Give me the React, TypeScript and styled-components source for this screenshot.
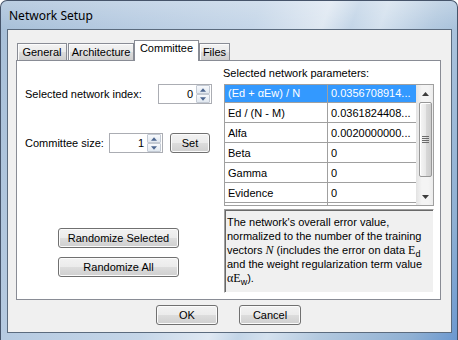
import React from "react"
import styled, { createGlobalStyle, css } from "styled-components"

const GlobalStyle = createGlobalStyle`
    html, body {
        margin: 0;
        padding: 0;
        overflow: hidden;
    }
    body {
        font-family: "Liberation Sans", Arial, sans-serif;
        font-size: 11px;
        color: #000;
    }
    * {
        box-sizing: border-box;
    }
`

const Window = styled.div`
    width: 458px;
    height: 340px;
    display: flex;
    flex-direction: column;
    padding: 0 5px 7px 6px;
    border: 1px solid #46546a;
    border-bottom: none;
    border-radius: 7px 7px 0 0;
    background:
        linear-gradient(180deg, rgba(255,255,255,0.22) 0, rgba(255,255,255,0) 28px),
        linear-gradient(110deg, #a7bfd8 0%, #b8cce2 25%, #c5d6e8 45%, #dfe8f2 57%, #c3d5e7 62%, #d4e1ee 67%, #b3c9df 76%, #8fb0d3 92%, #6b98d0 100%);
`

const TitleBar = styled.div`
    height: 28px;
    display: flex;
    align-items: center;
    padding-left: 2px;
    font-family: "Noto Sans", "Open Sans", sans-serif;
    font-size: 12px;
    color: #000;
`

const Client = styled.div`
    flex: 1;
    display: flex;
    flex-direction: column;
    padding: 10px 10px 0 8px;
    border: 1px solid #5b6b7e;
    background: #f0f0f0;
`

const TabStrip = styled.div`
    height: 20px;
    display: flex;
    align-items: flex-end;
    padding-left: 1px;
    position: relative;
    z-index: 1;
`

const Tab = styled.div<{ $w: number; $active?: boolean; $gap?: number }>`
    width: ${p => p.$w}px;
    height: 17px;
    margin-right: ${p => p.$gap ?? 0}px;
    border: 1px solid #898c95;
    border-bottom: none;
    text-align: center;
    line-height: 16px;
    background: linear-gradient(#f3f3f3 0%, #ebebeb 50%, #dddddd 50%, #cfcfcf 100%);
    box-shadow: inset 1px 1px 0 #fcfcfc;
    ${p => p.$active && css`
        height: 21px;
        margin-bottom: -1px;
        line-height: 15px;
        background: #fff;
        box-shadow: none;
    `}
`

const TabPanel = styled.div`
    height: 240px;
    display: grid;
    grid-template-columns: 207px 210px;
    padding-right: 5px;
    border: 1px solid #898c95;
    background: #fff;
`

const LeftColumn = styled.div`
    display: flex;
    flex-direction: column;
    padding: 23px 12px 0 8px;
`

const FieldRow = styled.div<{ $top?: number }>`
    display: flex;
    align-items: center;
    height: 20px;
    margin-top: ${p => p.$top ?? 0}px;
`

const Label = styled.span<{ $w?: number }>`
    ${p => p.$w ? `width: ${p.$w}px;` : "flex: 1;"}
    white-space: nowrap;
`

const SpinBox = styled.div`
    width: 54px;
    height: 20px;
    display: flex;
    align-items: center;
    border: 1px solid #abadb3;
    background: #fff;
`

const SpinValue = styled.span`
    flex: 1;
    text-align: right;
    padding-right: 3px;
`

const SpinButtons = styled.div`
    width: 14px;
    height: 18px;
    margin-right: 1px;
    display: flex;
    flex-direction: column;
`

const SpinArrow = styled.div`
    flex: 1;
    display: flex;
    align-items: center;
    justify-content: center;
    border: 1px solid #c3cad4;
    border-radius: 1px;
    background: linear-gradient(#f7f9fc, #e1e8f0);
`

const Button = styled.div<{ $w: number; $top?: number }>`
    width: ${p => p.$w}px;
    height: 20px;
    margin-top: ${p => p.$top ?? 0}px;
    display: flex;
    align-items: center;
    justify-content: center;
    border: 1px solid #707070;
    border-radius: 3px;
    background: linear-gradient(#f2f2f2 0%, #ebebeb 50%, #dddddd 50%, #cfcfcf 100%);
    box-shadow: inset 0 0 0 1px #fbfbfb;
    white-space: nowrap;
`

const RandomizeGroup = styled.div`
    display: flex;
    flex-direction: column;
    align-items: center;
    margin-top: 75px;
    gap: 9px;
`

const RightColumn = styled.div`
    display: flex;
    flex-direction: column;
    padding-top: 6px;
`

const Caption = styled.div`
    line-height: 13px;
    margin: 0 0 4px -1px;
    white-space: nowrap;
`

const Grid = styled.div`
    height: 122px;
    display: flex;
    border: 1px solid #a0a0a0;
    background: #fff;
`

const TableArea = styled.div`
    flex: 1;
    overflow: hidden;
`

const Rows = styled.div`
    margin-top: -2px;
`

const Row = styled.div<{ $selected?: boolean }>`
    display: flex;
    height: 20px;
    border-bottom: 1px solid #a0a0a0;
    ${p => p.$selected && css`
        background: #3399ff;
        color: #fff;
    `}
`

const Cell = styled.div<{ $w: number; $divider?: boolean }>`
    width: ${p => p.$w}px;
    padding: 2px 0 0 3px;
    line-height: 17px;
    white-space: nowrap;
    overflow: hidden;
    ${p => p.$divider && "border-right: 1px solid #a0a0a0;"}
`

const ScrollBar = styled.div`
    width: 17px;
    display: flex;
    flex-direction: column;
    border-left: 1px solid #e4e4e4;
    background: linear-gradient(90deg, #e6e6e6, #f4f4f4 30%, #f4f4f4 70%, #ececec);
`

const ScrollArrow = styled.div`
    height: 17px;
    display: flex;
    align-items: center;
    justify-content: center;
`

const Thumb = styled.div`
    height: 75px;
    margin: 0 1px 0 2px;
    display: flex;
    align-items: center;
    justify-content: center;
    border: 1px solid #979797;
    border-radius: 2px;
    background: linear-gradient(90deg, #f6f6f6 0%, #e9e9e9 50%, #d9d9d9 51%, #cdcdcd 100%);
    box-shadow: inset 1px 1px 0 #fff;
`

const Grip = styled.div`
    width: 7px;
    height: 7px;
    background: repeating-linear-gradient(#6b6b6b 0, #6b6b6b 1px, transparent 1px, transparent 2px);
`

const Description = styled.div`
    height: 84px;
    margin-top: 3px;
    padding: 5px 2px 0 2px;
    line-height: 14px;
    border: 1px solid;
    border-color: #a0a0a0 #ffffff #ffffff #a0a0a0;
    box-shadow: inset 1px 1px 0 #696969;
    background: #f0f0f0;
    white-space: nowrap;
`

const MathVar = styled.span<{ $italic?: boolean }>`
    font-family: "Liberation Serif", "Times New Roman", serif;
    font-size: 12px;
    font-style: ${p => p.$italic ? "italic" : "normal"};
`

const Sub = styled.sub`
    font-size: 9px;
    line-height: 0;
    vertical-align: -3px;
`

const DialogButtons = styled.div`
    display: flex;
    justify-content: center;
    gap: 21px;
    margin-top: 5px;
`

const Arrow: React.FC<{ down?: boolean; color?: string; w?: number }> = ({ down, color = "#4c6690", w = 7 }) => (
    <svg width={w} height={4} viewBox="0 0 7 4">
        <polygon points={down ? "0,0 7,0 3.5,4" : "0,4 7,4 3.5,0"} fill={color} />
    </svg>
)

const Spinner: React.FC<{ value: string }> = ({ value }) => (
    <SpinBox>
        <SpinValue>{value}</SpinValue>
        <SpinButtons>
            <SpinArrow><Arrow w={6} /></SpinArrow>
            <SpinArrow><Arrow w={6} down /></SpinArrow>
        </SpinButtons>
    </SpinBox>
)

const params = [
    { name: "(Ed + αEw) / N", value: "0.0356708914..." },
    { name: "Ed / (N - M)", value: "0.0361824408..." },
    { name: "Alfa", value: "0.0020000000..." },
    { name: "Beta", value: "0" },
    { name: "Gamma", value: "0" },
    { name: "Evidence", value: "0" },
    { name: "", value: "" },
]

export default function App() {
    return <>
        <GlobalStyle />
        <Window>
            <TitleBar>Network Setup</TitleBar>
            <Client>
                <TabStrip>
                    <Tab $w={50} $gap={1}>General</Tab>
                    <Tab $w={66}>Architecture</Tab>
                    <Tab $w={65} $active>Committee</Tab>
                    <Tab $w={31}>Files</Tab>
                </TabStrip>
                <TabPanel>
                    <LeftColumn>
                        <FieldRow>
                            <Label>Selected network index:</Label>
                            <Spinner value="0" />
                        </FieldRow>
                        <FieldRow $top={29}>
                            <Label $w={84}>Committee size:</Label>
                            <Spinner value="1" />
                            <Button $w={40} style={{ marginLeft: 7 }}>Set</Button>
                        </FieldRow>
                        <RandomizeGroup>
                            <Button $w={121}>Randomize Selected</Button>
                            <Button $w={121}>Randomize All</Button>
                        </RandomizeGroup>
                    </LeftColumn>
                    <RightColumn>
                        <Caption>Selected network parameters:</Caption>
                        <Grid>
                            <TableArea>
                                <Rows>
                                    {params.map((p, i) => (
                                        <Row key={i} $selected={i === 0}>
                                            <Cell $w={103} $divider>{p.name}</Cell>
                                            <Cell $w={88}>{p.value}</Cell>
                                        </Row>
                                    ))}
                                </Rows>
                            </TableArea>
                            <ScrollBar>
                                <ScrollArrow><Arrow color="#3d3d3d" /></ScrollArrow>
                                <Thumb><Grip /></Thumb>
                                <div style={{ flex: 1 }} />
                                <ScrollArrow><Arrow color="#3d3d3d" down /></ScrollArrow>
                            </ScrollBar>
                        </Grid>
                        <Description>
                            The network's overall error value,<br />
                            normalized to the number of the training<br />
                            vectors <MathVar $italic>N</MathVar> (includes the error on data <MathVar>E</MathVar><Sub>d</Sub><br />
                            and the weight regularization term value<br />
                            <MathVar>αE</MathVar><Sub>w</Sub>).
                        </Description>
                    </RightColumn>
                </TabPanel>
                <DialogButtons>
                    <Button $w={62}>OK</Button>
                    <Button $w={62}>Cancel</Button>
                </DialogButtons>
            </Client>
        </Window>
    </>
}
